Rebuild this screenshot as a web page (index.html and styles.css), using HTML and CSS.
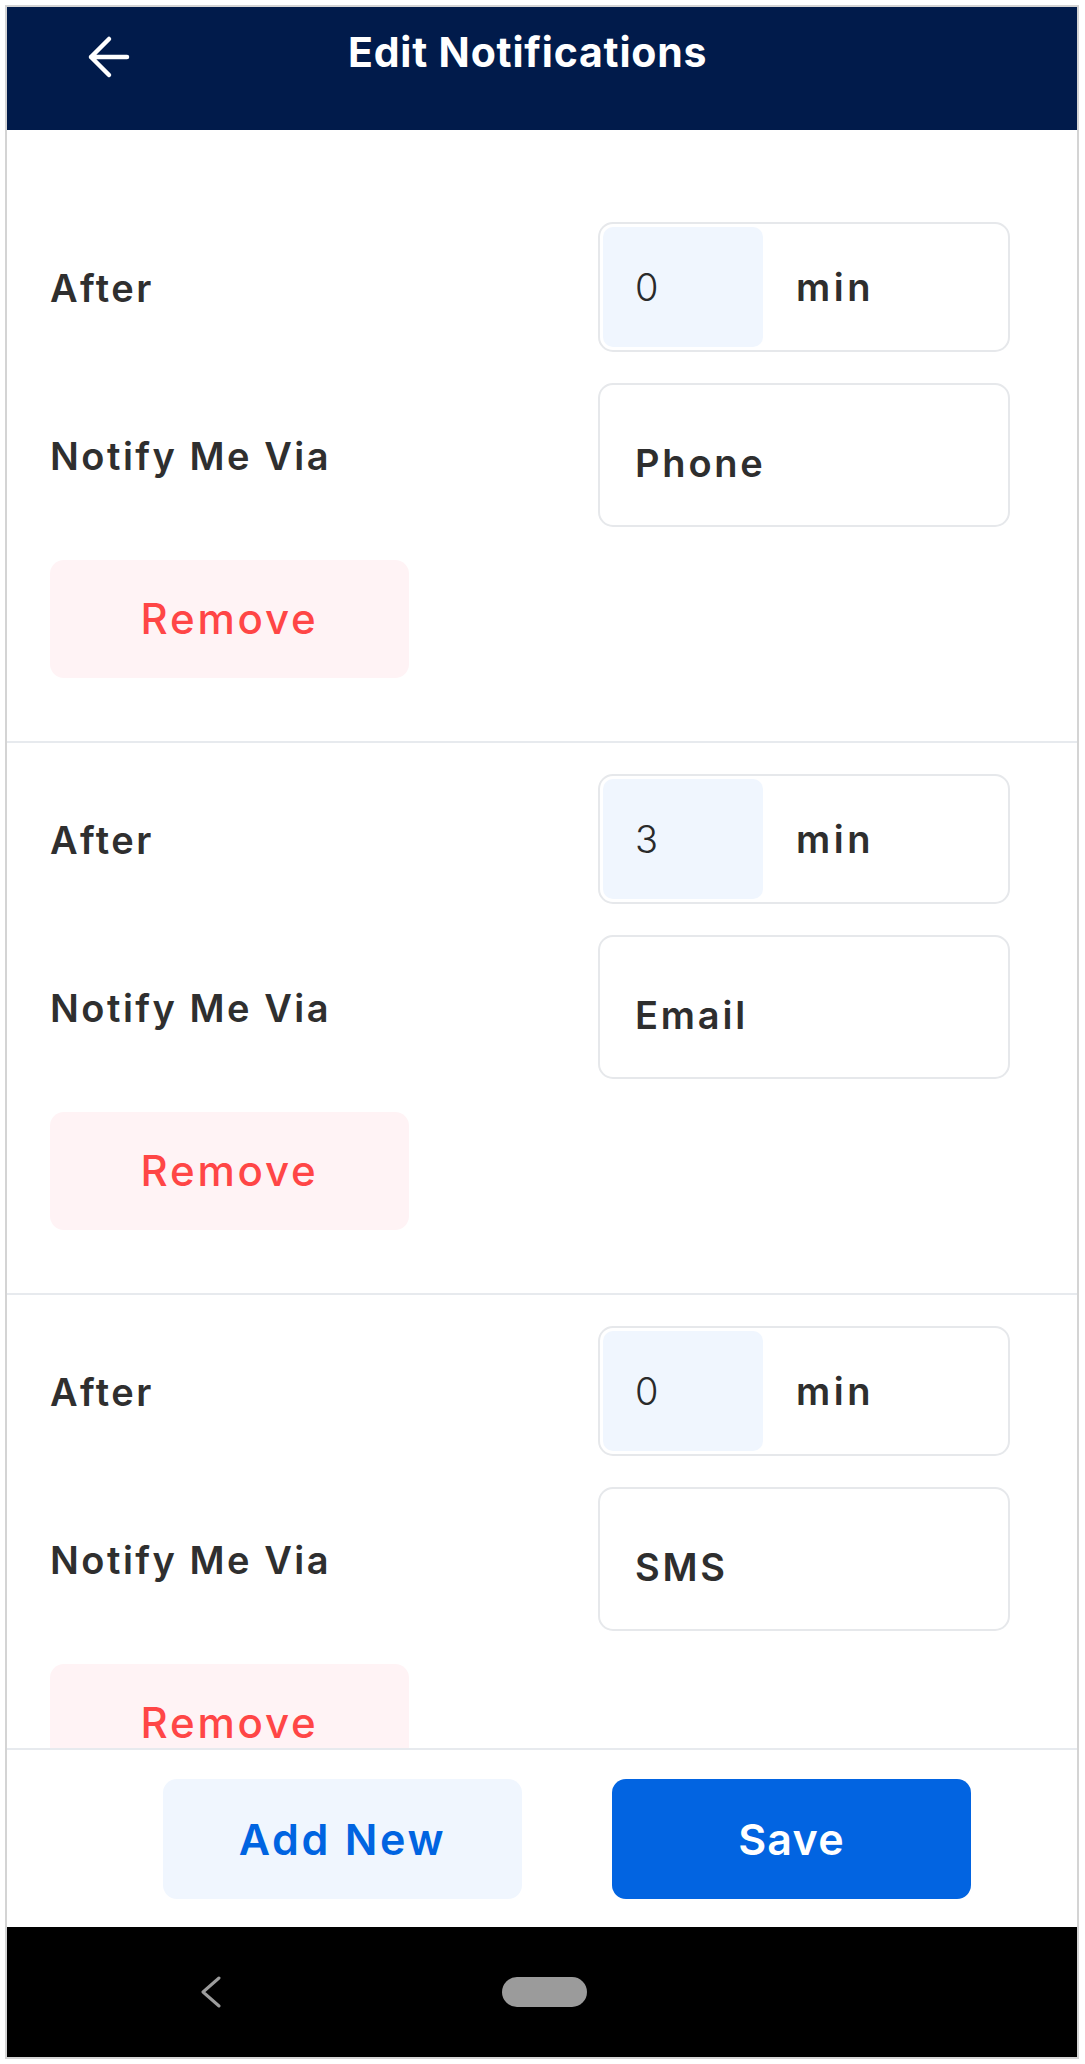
FILE: index.html
```html
<!DOCTYPE html>
<html lang="en">
<head>
<meta charset="utf-8">
<title>Edit Notifications</title>
<link rel="stylesheet" href="styles.css">
</head>
<body>
<div class="frame">
  <header class="topbar">
    <div class="topbar-row">
      <svg class="back" width="44" height="44" viewBox="0 0 44 44" aria-hidden="true">
        <path d="M22 4 L4 22 L22 40 M4 22 H40" fill="none" stroke="#fff" stroke-width="4.5" stroke-linecap="round" stroke-linejoin="round"/>
      </svg>
      <h1 class="title">Edit Notifications</h1>
    </div>
  </header>

  <main class="list">
    <section class="rule">
      <div class="row">
        <span class="label">After</span>
        <div class="field field-min"><span class="num">0</span><span class="unit">min</span></div>
      </div>
      <div class="row row-via">
        <span class="label">Notify Me Via</span>
        <div class="field field-via"><span class="via">Phone</span></div>
      </div>
      <button class="remove">Remove</button>
    </section>

    <section class="rule">
      <div class="row">
        <span class="label">After</span>
        <div class="field field-min"><span class="num">3</span><span class="unit">min</span></div>
      </div>
      <div class="row row-via">
        <span class="label">Notify Me Via</span>
        <div class="field field-via"><span class="via">Email</span></div>
      </div>
      <button class="remove">Remove</button>
    </section>

    <section class="rule">
      <div class="row">
        <span class="label">After</span>
        <div class="field field-min"><span class="num">0</span><span class="unit">min</span></div>
      </div>
      <div class="row row-via">
        <span class="label">Notify Me Via</span>
        <div class="field field-via"><span class="via">SMS</span></div>
      </div>
      <button class="remove">Remove</button>
    </section>
  </main>

  <footer class="actions">
    <button class="btn btn-add">Add New</button>
    <button class="btn btn-save">Save</button>
  </footer>

  <nav class="sysnav">
    <svg class="sys-back" width="22" height="32" viewBox="0 0 22 32" aria-hidden="true">
      <path d="M19 2 L3 16 L19 30" fill="none" stroke="#9c9c9c" stroke-width="3" stroke-linecap="round" stroke-linejoin="round"/>
    </svg>
    <span class="sys-home"></span>
  </nav>
</div>
</body>
</html>
```

FILE: styles.css
```css
* { box-sizing: border-box; }

html, body {
  margin: 0;
  padding: 0;
  background: #ffffff;
}

body {
  font-family: Inter, "Noto Sans", "Liberation Sans", sans-serif;
  color: #2e2e2e;
}

.frame {
  margin: 5px;
  width: 1074px;
  height: 2054px;
  border: 2px solid #d4d4d4;
  display: flex;
  flex-direction: column;
  background: #ffffff;
  overflow: hidden;
}

/* Header */
.topbar {
  flex-shrink: 0;
  height: 123px;
  background: #011b4b;
}

.topbar-row {
  height: 100px;
  display: flex;
  align-items: center;
  padding-left: 80px;
}

.back {
  display: block;
  flex-shrink: 0;
}

.title {
  margin: 0 0 10px 217px;
  color: #ffffff;
  font-size: 41px;
  font-weight: 700;
  line-height: 1;
  letter-spacing: 0.8px;
}

/* List */
.list {
  flex: 1;
  min-height: 0;
  overflow: hidden;
  padding-top: 61px;
}

.rule {
  display: flex;
  flex-direction: column;
  align-items: flex-start;
  padding: 31px 67px 63px 43px;
  border-bottom: 2px solid #e7eaee;
}

.row {
  width: 100%;
  display: flex;
  justify-content: space-between;
  align-items: center;
}

.row-via {
  margin-top: 31px;
}

.label {
  font-size: 38px;
  font-weight: 600;
  line-height: 1;
  letter-spacing: 2.5px;
  color: #2f2f2f;
  margin-top: 2px;
}

.field {
  width: 412px;
  border: 2px solid #e6e8eb;
  border-radius: 15px;
  background: #ffffff;
}

.field-min {
  height: 130px;
  padding: 3px;
  display: flex;
  align-items: center;
}

.num {
  width: 160px;
  height: 100%;
  display: flex;
  align-items: center;
  padding-left: 32px;
  background: #f0f6fe;
  border-radius: 10px;
  font-size: 38px;
  font-weight: 300;
  line-height: 1;
  color: #2a2a2a;
}

.unit {
  margin-left: 33px;
  font-size: 38px;
  font-weight: 600;
  line-height: 1;
  letter-spacing: 3.5px;
  color: #2e2e2e;
}

.field-via {
  height: 144px;
  display: flex;
  align-items: center;
  padding: 16px 0 0 35px;
}

.via {
  font-size: 38px;
  font-weight: 600;
  line-height: 1;
  letter-spacing: 2.8px;
  color: #2e2e2e;
}

.remove {
  margin-top: 33px;
  width: 359px;
  height: 118px;
  flex-shrink: 0;
  border: none;
  border-radius: 14px;
  background: #fff3f5;
  color: #ff4646;
  font-family: inherit;
  font-size: 42px;
  font-weight: 500;
  line-height: 1;
  letter-spacing: 2.8px;
  padding: 0;
}

/* Footer actions */
.actions {
  flex-shrink: 0;
  display: flex;
  gap: 90px;
  padding: 29px 0 28px 156px;
  border-top: 2px solid #e7eaee;
  background: #ffffff;
}

.btn {
  width: 359px;
  height: 120px;
  border: none;
  border-radius: 14px;
  font-family: inherit;
  font-size: 43px;
  font-weight: 600;
  line-height: 1;
  padding: 0;
}

.btn-add {
  background: #f0f6fe;
  color: #0064e1;
  letter-spacing: 2.7px;
}

.btn-save {
  background: #0264e1;
  color: #ffffff;
  letter-spacing: 1.2px;
}

/* System navigation bar */
.sysnav {
  flex-shrink: 0;
  height: 130px;
  background: #000000;
  display: flex;
  align-items: center;
  padding-left: 193px;
}

.sys-back {
  display: block;
}

.sys-home {
  margin-left: 280px;
  width: 85px;
  height: 30px;
  border-radius: 15px;
  background: #9b9b9b;
}
```
